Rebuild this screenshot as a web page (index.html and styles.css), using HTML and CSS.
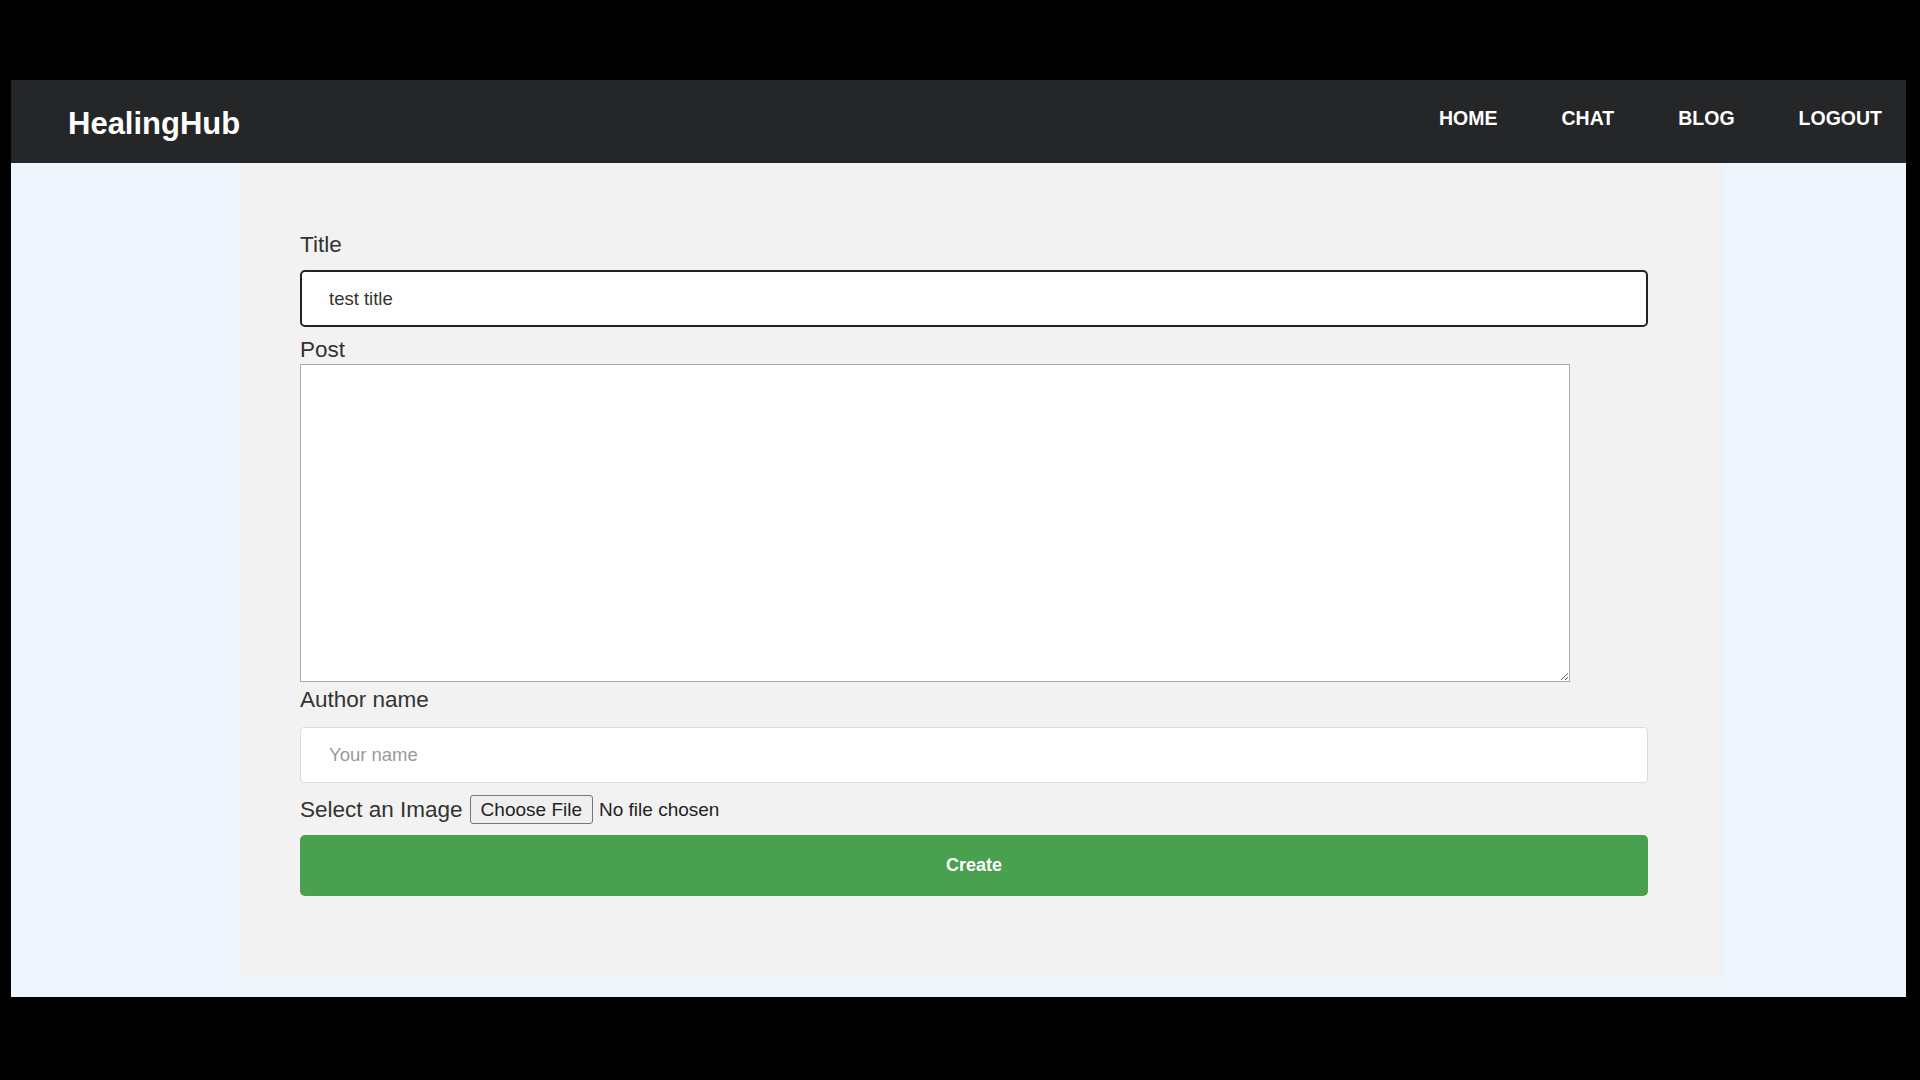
FILE: index.html
```html
<!DOCTYPE html>
<html lang="en">
<head>
  <meta charset="UTF-8" />
  <meta name="viewport" content="width=device-width, initial-scale=1.0"/>
  <title>HealingHub - New Post</title>
  <link rel="stylesheet" href="styles.css">
</head>
<body>

<div class="screen">
  <div class="page">
    <nav class="navbar">
      <a class="brand" href="#">HealingHub</a>
      <ul class="nav-links">
        <li><a href="#">HOME</a></li>
        <li><a href="#">CHAT</a></li>
        <li><a href="#">BLOG</a></li>
        <li><a href="#">LOGOUT</a></li>
      </ul>
    </nav>

    <main class="content">
      <form class="post-form" onsubmit="return false;">
        <label class="field-label" for="title">Title</label>
        <input type="text" id="title" class="text-input focused" value="test title" />

        <label class="field-label label-post" for="post">Post</label>
        <textarea id="post" class="post-area"></textarea>

        <label class="field-label label-author" for="author">Author name</label>
        <input type="text" id="author" class="text-input author-input" placeholder="Your name" />

        <div class="image-row">
          <label class="field-label" for="image">Select an Image</label>
          <input type="file" id="image" class="file-input" />
        </div>

        <button type="submit" class="create-btn">Create</button>
      </form>
    </main>
  </div>
</div>

</body>
</html>
```

FILE: styles.css
```css
* {
  box-sizing: border-box;
}

body {
  margin: 0;
  background: #000;
  font-family: "Liberation Sans", Arial, sans-serif;
}

.screen {
  width: 1920px;
  height: 1080px;
  padding: 80px 14px 83px 11px;
}

.page {
  height: 100%;
  background: #eef5fc;
  display: flex;
  flex-direction: column;
}

.navbar {
  height: 83px;
  background: #252627;
  display: flex;
  align-items: center;
  justify-content: space-between;
  padding: 0 24px 0 57px;
}

.brand {
  color: #fff;
  font-size: 31px;
  font-weight: bold;
  text-decoration: none;
  margin-top: 5px;
}

.nav-links {
  list-style: none;
  margin: 0;
  padding: 0 0 6px 0;
  display: flex;
  gap: 64px;
}

.nav-links a {
  color: #fff;
  font-size: 19.5px;
  font-weight: bold;
  text-decoration: none;
}

.content {
  flex: 1;
  padding: 0 0 20px 228px;
}

.post-form {
  width: 1484px;
  height: 100%;
  background: #f2f2f2;
  padding: 70px 0 0 61px;
}

.field-label {
  display: block;
  font-size: 22.5px;
  line-height: 24px;
  color: #333;
}

.text-input {
  display: block;
  width: 1348px;
  height: 56px;
  margin-top: 13px;
  padding: 0 28px;
  font-family: "Liberation Sans", Arial, sans-serif;
  font-size: 18.5px;
  color: #333;
  background: #fff;
  border: 1px solid #dcdcdc;
  border-radius: 4px;
  outline: none;
}

.text-input.focused {
  height: 57px;
  padding: 0 27px;
  border: 2px solid #222;
  border-radius: 5px;
}

.text-input::placeholder {
  color: #9a9a9a;
}

.label-post {
  margin-top: 11px;
}

.post-area {
  display: block;
  width: 1270px;
  height: 318px;
  margin-top: 2px;
  border: 1px solid #a9a9a9;
  background: #fff;
  font-family: "Liberation Sans", Arial, sans-serif;
  font-size: 18px;
  outline: none;
}

.label-author {
  margin-top: 6px;
}

.author-input {
  margin-top: 15px;
}

.image-row {
  display: flex;
  align-items: center;
  gap: 7px;
  margin-top: 12px;
  height: 29px;
}

.file-input {
  font-family: "Liberation Sans", Arial, sans-serif;
  font-size: 19px;
  color: #222;
}

.file-input::file-selector-button {
  font-family: "Liberation Sans", Arial, sans-serif;
  font-size: 19px;
  color: #222;
  height: 29px;
  padding: 0 10px;
  margin-right: 6px;
  background: #efefef;
  border: 1px solid #767676;
  border-radius: 3px;
}

.create-btn {
  display: block;
  width: 1348px;
  height: 61px;
  margin-top: 11px;
  background: #49a04f;
  color: #fff;
  font-family: "Liberation Sans", Arial, sans-serif;
  font-size: 18px;
  font-weight: bold;
  border: none;
  border-radius: 5px;
  cursor: pointer;
}

.create-btn:hover {
  background: #3f8f45;
}
```
